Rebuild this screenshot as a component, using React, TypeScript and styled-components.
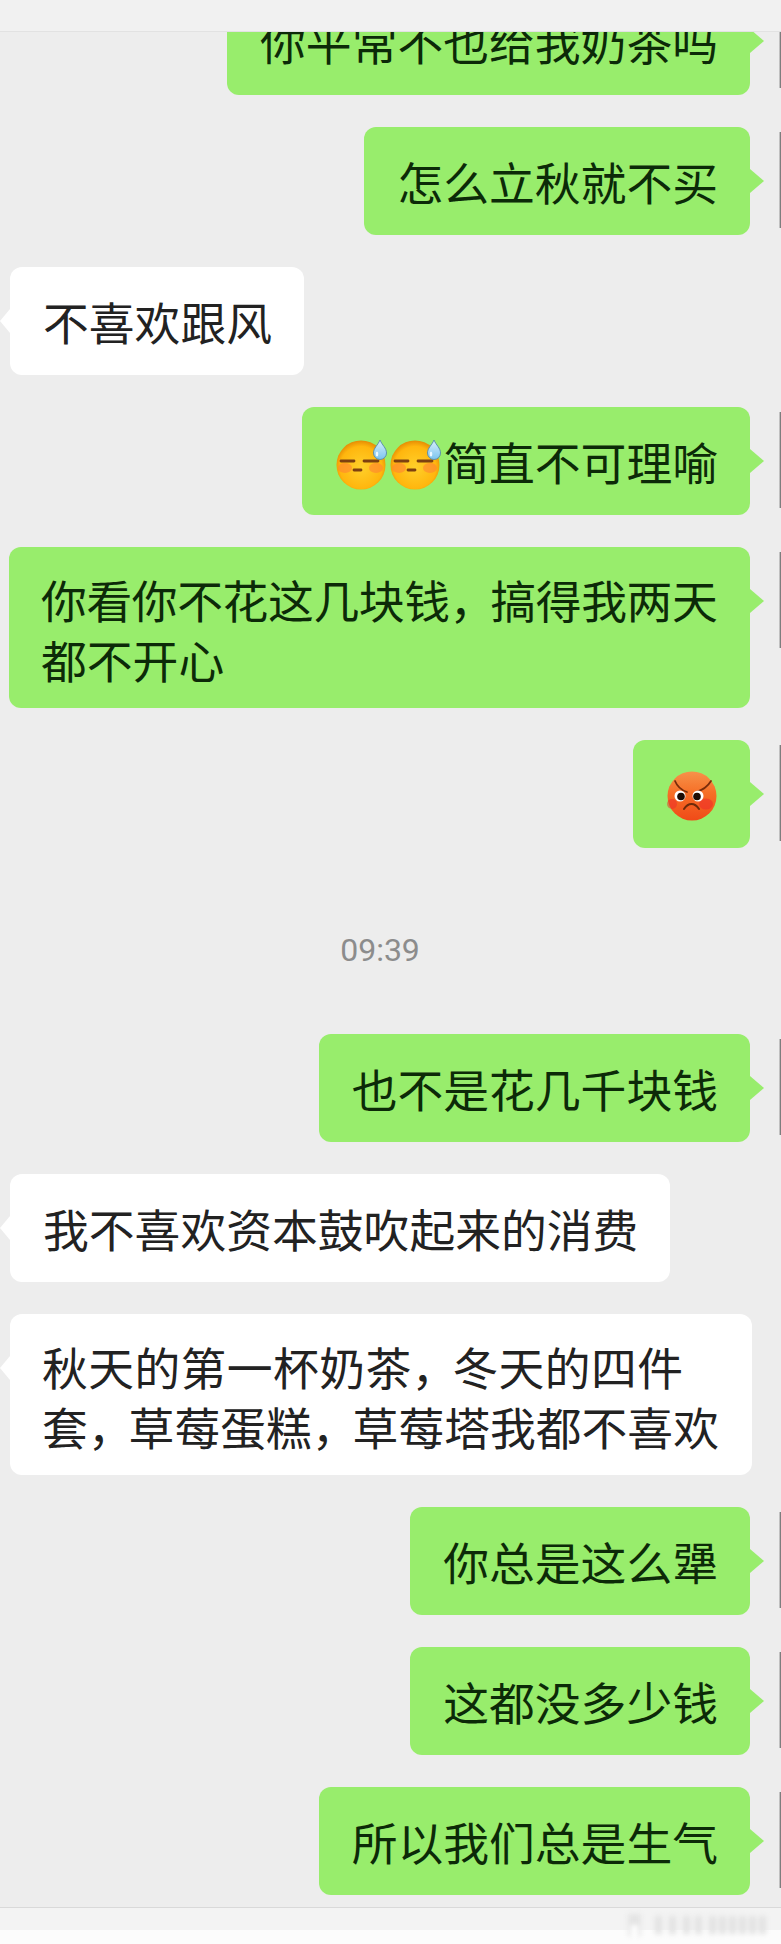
import React from "react";
import styled, { createGlobalStyle } from "styled-components";

const Global = createGlobalStyle`
  html, body { margin: 0; padding: 0; background: #ededed; }
`;

const Page = styled.div`
  width: 781px;
  height: 1944px;
  display: flex;
  flex-direction: column;
  overflow: hidden;
  background: #ededed;
  font-family: "Noto Sans CJK SC", "Liberation Sans", sans-serif;
`;

const TopBar = styled.div`
  flex: 0 0 32px;
  box-sizing: border-box;
  background: #f1f1f1;
  border-bottom: 1px solid #e2e2e2;
`;

const Chat = styled.div`
  flex: 1;
  min-height: 0;
  overflow: hidden;
  display: flex;
  flex-direction: column;
  gap: 32px;
  padding: 0 31px 0 10px;
`;

const Row = styled.div<{ $mine?: boolean; $clip?: boolean }>`
  position: relative;
  display: flex;
  justify-content: ${(p) => (p.$mine ? "flex-end" : "flex-start")};
  margin-top: ${(p) => (p.$clip ? "-45px" : "0")};
`;

const AvatarEdge = styled.span`
  position: absolute;
  top: 5px;
  right: -31px;
  width: 2px;
  height: 96px;
  background: linear-gradient(to right, #e2e2e2, #5c5c5c);
`;

const Bubble = styled.div<{ $mine?: boolean; $wrapped?: boolean }>`
  position: relative;
  box-sizing: border-box;
  flex: none;
  min-height: 108px;
  padding: ${(p) => (p.$wrapped ? "22px 0 19px 32px" : "23px 32px 22px 33px")};
  border-radius: 12px;
  background: ${(p) => (p.$mine ? "#98ed6c" : "#ffffff")};
  color: ${(p) => (p.$mine ? "#0c2a08" : "#222222")};
  font-size: 45.8px;
  line-height: ${(p) => (p.$wrapped ? "60px" : "63px")};
  display: ${(p) => (p.$wrapped ? "block" : "flex")};
  width: ${(p) => (p.$wrapped ? (p.$mine ? "741px" : "742px") : "auto")};
  align-items: center;
  &::after {
    content: "";
    position: absolute;
    top: 42px;
    ${(p) => (p.$mine ? "right: -14px;" : "left: -10px;")}
    width: 0;
    height: 0;
    border-top: 12px solid transparent;
    border-bottom: 12px solid transparent;
    ${(p) =>
      p.$mine ? "border-left: 14px solid #98ed6c;" : "border-right: 10px solid #ffffff;"}
  }
`;

const Line = styled.div<{ $track?: number }>`
  white-space: nowrap;
  letter-spacing: ${(p) => p.$track ?? 0}px;
`;

const Comma = styled.span`
  letter-spacing: -5px;
`;

const EmojiSlot = styled.span<{ $alone?: boolean }>`
  display: inline-flex;
  flex: none;
  margin: ${(p) => (p.$alone ? "2px 1px 0" : "2px 0 0")};
`;

const TimeLabel = styled.div`
  text-align: center;
  font-family: "Roboto", "Liberation Sans", sans-serif;
  font-size: 32px;
  line-height: 38px;
  color: #8c8c8c;
  margin: 51px 0 33px;
`;

const BottomBar = styled.div`
  position: relative;
  flex: 0 0 37px;
  box-sizing: border-box;
  border-top: 1px solid #d9d9d9;
  background: linear-gradient(to bottom, #f3f3f3 0 22px, #fcfcfc 22px);
`;

const WatermarkSmear = styled.svg`
  position: absolute;
  top: 3px;
  right: 6px;
  filter: blur(2.5px);
`;

const Sleepy = ({ id }: { id: string }) => (
  <svg width="54" height="54" viewBox="0 0 54 54" aria-hidden="true">
    <defs>
      <radialGradient id={id} cx="50%" cy="55%" r="55%">
        <stop offset="0%" stopColor="#ffd02a" />
        <stop offset="78%" stopColor="#ffb60e" />
        <stop offset="100%" stopColor="#e58c04" />
      </radialGradient>
      <linearGradient id={`${id}d`} x1="0" y1="0" x2="0" y2="1">
        <stop offset="0%" stopColor="#d8f0fc" />
        <stop offset="100%" stopColor="#7cc4ee" />
      </linearGradient>
    </defs>
    <circle cx="26" cy="29" r="24.500" fill={`url(#${id})`} />
    <ellipse cx="10" cy="32" rx="7" ry="5" fill="#ff8434" opacity="0.6" />
    <ellipse cx="41" cy="32" rx="7" ry="5" fill="#ff8434" opacity="0.6" />
    <path d="M6 25h13M29 25h14M19 34h7" stroke="#7d4010" strokeWidth="2.800" strokeLinecap="round" />
    <path d="M45 4c2 5 6.500 8 6.500 13a6.500 6.500 0 0 1-13 0c0-5 4.500-8 6.500-13z" fill={`url(#${id}d)`} stroke="#5488aa" strokeWidth="0.900" />
    <ellipse cx="42" cy="18" rx="1.300" ry="2.600" fill="#eef9ff" />
  </svg>
);

const Angry = () => (
  <svg width="50" height="50" viewBox="0 0 50 50" aria-hidden="true">
    <defs>
      <linearGradient id="an" x1="0" y1="0" x2="0" y2="1">
        <stop offset="0%" stopColor="#f7924a" />
        <stop offset="45%" stopColor="#f66e26" />
        <stop offset="100%" stopColor="#f04a18" />
      </linearGradient>
    </defs>
    <circle cx="25" cy="25" r="24.500" fill="url(#an)" />
    <ellipse cx="5" cy="33" rx="5" ry="5" fill="#ee2a2a" opacity="0.5" />
    <ellipse cx="39" cy="33" rx="7" ry="5.500" fill="#ee2a2a" opacity="0.55" />
    <path d="M8 10c2 5 6 9 12 11M44 10c-3 5-8 9-15 11" fill="none" stroke="#7a2c0a" strokeWidth="1.800" strokeLinecap="round" />
    <circle cx="13" cy="25" r="5.500" fill="#ffffff" />
    <circle cx="31" cy="25" r="5.500" fill="#ffffff" />
    <circle cx="14" cy="25.500" r="3.800" fill="#1d0d06" />
    <circle cx="30" cy="25.500" r="3.800" fill="#1d0d06" />
    <path d="M17 38c2-3 5-5 7.500-5s5.500 2 7.500 5" fill="none" stroke="#6e2a0a" strokeWidth="2" strokeLinecap="round" />
  </svg>
);

const smearBars = [30, 44, 58, 70, 84, 94, 104, 114, 124, 134];

export default function App() {
  return (
    <Page>
      <Global />
      <TopBar />
      <Chat>
        <Row $mine $clip><Bubble $mine>你平常不也给我奶茶吗</Bubble><AvatarEdge /></Row>
        <Row $mine><Bubble $mine>怎么立秋就不买</Bubble><AvatarEdge /></Row>
        <Row><Bubble>不喜欢跟风</Bubble></Row>
        <Row $mine>
          <Bubble $mine>
            <EmojiSlot><Sleepy id="s1" /></EmojiSlot>
            <EmojiSlot><Sleepy id="s2" /></EmojiSlot>
            简直不可理喻
          </Bubble>
          <AvatarEdge />
        </Row>
        <Row $mine>
          <Bubble $mine $wrapped>
            <Line $track={-0.4}>你看你不花这几块钱<Comma>，</Comma>搞得我两天</Line>
            <Line>都不开心</Line>
          </Bubble>
          <AvatarEdge />
        </Row>
        <Row $mine>
          <Bubble $mine><EmojiSlot $alone><Angry /></EmojiSlot></Bubble>
          <AvatarEdge />
        </Row>
        <TimeLabel>09:39</TimeLabel>
        <Row $mine><Bubble $mine>也不是花几千块钱</Bubble><AvatarEdge /></Row>
        <Row><Bubble>我不喜欢资本鼓吹起来的消费</Bubble></Row>
        <Row>
          <Bubble $wrapped>
            <Line $track={0.4}>秋天的第一杯奶茶<Comma>，</Comma>冬天的四件</Line>
            <Line>套<Comma>，</Comma>草莓蛋糕<Comma>，</Comma>草莓塔我都不喜欢</Line>
          </Bubble>
        </Row>
        <Row $mine><Bubble $mine>你总是这么犟</Bubble><AvatarEdge /></Row>
        <Row $mine><Bubble $mine>这都没多少钱</Bubble><AvatarEdge /></Row>
        <Row $mine><Bubble $mine>所以我们总是生气</Bubble><AvatarEdge /></Row>
      </Chat>
      <BottomBar>
        <WatermarkSmear width="150" height="28" viewBox="0 0 150 28" aria-hidden="true">
          <rect x="3" y="3" width="13" height="22" fill="#e4e4e4" />
          <rect x="6" y="14" width="7" height="11" fill="#ffffff" />
          {smearBars.map((x) => (
            <rect key={x} x={x} y="5" width="7" height="18" fill="#e2e2e2" />
          ))}
        </WatermarkSmear>
      </BottomBar>
    </Page>
  );
}
